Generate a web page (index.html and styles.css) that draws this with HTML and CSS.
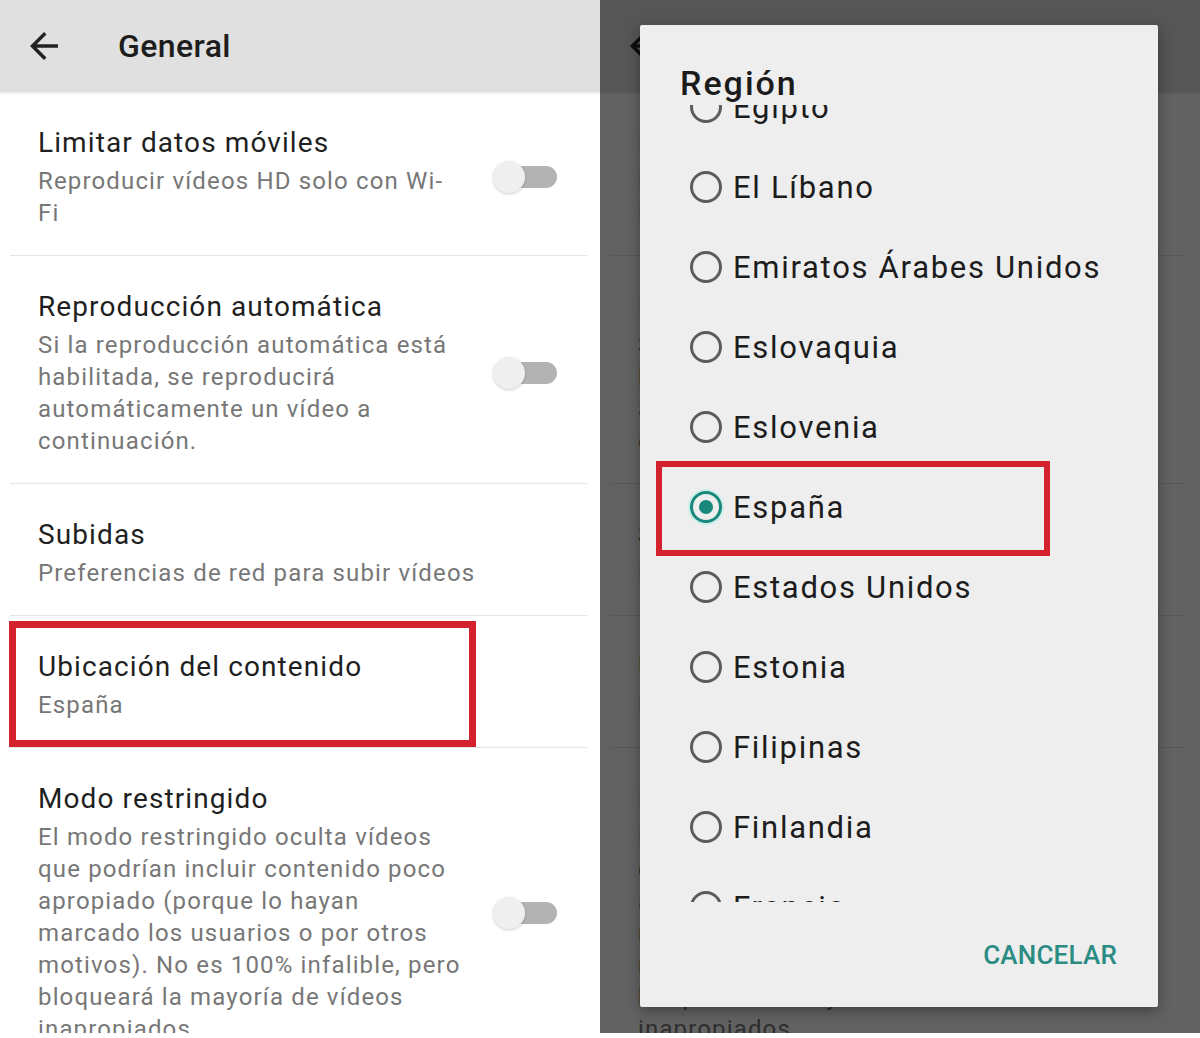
FILE: index.html
```html
<!DOCTYPE html>
<html lang="es">
<head>
<meta charset="utf-8">
<title>General - Región</title>
<link rel="stylesheet" href="styles.css">
</head>
<body>
<div class="page">
  <section class="screen">
    <header class="appbar">
      <svg class="back" viewBox="0 0 24 24" width="42" height="42"><path d="M20 11H7.83l5.59-5.59L12 4l-8 8 8 8 1.41-1.41L7.83 13H20v-2z" fill="#222"/></svg>
      <h1 class="appbar-title">General</h1>
    </header>
    <ul class="settings">
      <li class="item">
        <div class="text"><div class="title">Limitar datos móviles</div><div class="sub">Reproducir vídeos HD solo con Wi-Fi</div></div>
        <span class="switch"><span class="thumb"></span></span>
      </li>
      <li class="item">
        <div class="text"><div class="title">Reproducción automática</div><div class="sub">Si la reproducción automática está habilitada, se reproducirá automáticamente un vídeo a continuación.</div></div>
        <span class="switch"><span class="thumb"></span></span>
      </li>
      <li class="item">
        <div class="text"><div class="title">Subidas</div><div class="sub">Preferencias de red para subir vídeos</div></div>
      </li>
      <li class="item">
        <div class="text"><div class="title">Ubicación del contenido</div><div class="sub">España</div></div>
        <span class="mark mark-left"></span>
      </li>
      <li class="item">
        <div class="text"><div class="title">Modo restringido</div><div class="sub">El modo restringido oculta vídeos que podrían incluir contenido poco apropiado (porque lo hayan marcado los usuarios o por otros motivos). No es 100% infalible, pero bloqueará la mayoría de vídeos inapropiados.</div></div>
        <span class="switch"><span class="thumb"></span></span>
      </li>
    </ul>
  </section>

  <section class="screen">
    <header class="appbar">
      <svg class="back" viewBox="0 0 24 24" width="42" height="42"><path d="M20 11H7.83l5.59-5.59L12 4l-8 8 8 8 1.41-1.41L7.83 13H20v-2z" fill="#222"/></svg>
      <h1 class="appbar-title">General</h1>
    </header>
    <ul class="settings">
      <li class="item">
        <div class="text"><div class="title">Limitar datos móviles</div><div class="sub">Reproducir vídeos HD solo con Wi-Fi</div></div>
        <span class="switch"><span class="thumb"></span></span>
      </li>
      <li class="item">
        <div class="text"><div class="title">Reproducción automática</div><div class="sub">Si la reproducción automática está habilitada, se reproducirá automáticamente un vídeo a continuación.</div></div>
        <span class="switch"><span class="thumb"></span></span>
      </li>
      <li class="item">
        <div class="text"><div class="title">Subidas</div><div class="sub">Preferencias de red para subir vídeos</div></div>
      </li>
      <li class="item">
        <div class="text"><div class="title">Ubicación del contenido</div><div class="sub">España</div></div>
      </li>
      <li class="item">
        <div class="text"><div class="title">Modo restringido</div><div class="sub">El modo restringido oculta vídeos que podrían incluir contenido poco apropiado (porque lo hayan marcado los usuarios o por otros motivos). No es 100% infalible, pero bloqueará la mayoría de vídeos inapropiados.</div></div>
        <span class="switch"><span class="thumb"></span></span>
      </li>
    </ul>
    <div class="scrim"></div>
    <div class="dialog">
      <h2 class="dialog-title">Región</h2>
      <div class="options">
        <ul class="option-list">
          <li class="option"><span class="radio"></span><span class="label">Egipto</span></li>
          <li class="option"><span class="radio"></span><span class="label">El Líbano</span></li>
          <li class="option"><span class="radio"></span><span class="label">Emiratos Árabes Unidos</span></li>
          <li class="option"><span class="radio"></span><span class="label">Eslovaquia</span></li>
          <li class="option"><span class="radio"></span><span class="label">Eslovenia</span></li>
          <li class="option selected"><span class="radio"></span><span class="label">España</span><span class="mark mark-right"></span></li>
          <li class="option"><span class="radio"></span><span class="label">Estados Unidos</span></li>
          <li class="option"><span class="radio"></span><span class="label">Estonia</span></li>
          <li class="option"><span class="radio"></span><span class="label">Filipinas</span></li>
          <li class="option"><span class="radio"></span><span class="label">Finlandia</span></li>
          <li class="option"><span class="radio"></span><span class="label">Francia</span></li>
        </ul>
      </div>
      <div class="actions"><span class="btn">CANCELAR</span></div>
    </div>
  </section>
</div>
</body>
</html>
```

FILE: styles.css
```css
* { box-sizing: border-box; }
html, body { margin: 0; padding: 0; background: #fff; }
body { font-family: Roboto, "Noto Sans", "Liberation Sans", sans-serif; color: #212121; }

.page { display: flex; width: 1200px; height: 1038px; }

.screen {
  position: relative;
  width: 600px;
  height: 1033px;
  overflow: hidden;
  background: #fff;
}

.appbar {
  height: 92px;
  background: #e0e0e0;
  display: flex;
  align-items: center;
  box-shadow: 0 1px 3px rgba(0,0,0,0.12);
  position: relative;
  z-index: 1;
}
.back { margin-left: 23px; flex: none; }
.appbar-title {
  margin: 0 0 0 53px;
  font-size: 32px;
  font-weight: 500;
  letter-spacing: 0.4px;
  color: #1d1d1d;
}

.settings { list-style: none; margin: 0 13px 0 10px; padding: 0; }
.item {
  position: relative;
  display: flex;
  align-items: center;
  padding: 33px 30px 26px 28px;
  border-bottom: 1px solid #e6e6e6;
}
.text { flex: 1; min-width: 0; }
.title { font-size: 28px; line-height: 36px; letter-spacing: 1.1px; color: #1f1f1f; }
.sub { margin-top: 4px; font-size: 24px; line-height: 32px; letter-spacing: 1.15px; color: #777; }

.switch {
  position: relative;
  margin-left: 32px;
  width: 64px;
  height: 32px;
  flex: none;
}
.switch::before {
  content: "";
  position: absolute;
  left: 8px; top: 5px;
  width: 56px; height: 22px;
  border-radius: 11px;
  background: #b3b3b3;
}
.thumb {
  position: absolute;
  left: 0; top: 0;
  width: 32px; height: 32px;
  border-radius: 50%;
  background: #efefef;
  box-shadow: 0 1px 3px rgba(0,0,0,0.2);
}

.mark { position: absolute; border: 7px solid #d3222d; }
.mark-left { left: -1px; top: 5px; width: 467px; height: 126px; }

.scrim { position: absolute; inset: 0; background: rgba(0,0,0,0.615); z-index: 2; }

.dialog {
  position: absolute;
  z-index: 3;
  left: 40px; top: 25px;
  width: 518px; height: 982px;
  background: #eeeeee;
  border-radius: 2px;
  box-shadow: 0 4px 14px rgba(0,0,0,0.35);
  display: flex;
  flex-direction: column;
}
.dialog-title {
  position: relative;
  z-index: 1;
  height: 80px;
  margin: 0;
  padding: 38px 0 0 40px;
  font-size: 34px;
  line-height: 40px;
  font-weight: 500;
  letter-spacing: 2px;
  color: #1b1b1b;
}
.options { height: 797px; overflow: hidden; }
.option-list { list-style: none; margin: -38px 0 0; padding: 0; }
.option {
  position: relative;
  height: 80px;
  display: flex;
  align-items: center;
  padding-left: 50px;
}
.radio {
  width: 32px; height: 32px;
  border-radius: 50%;
  border: 3px solid #5c5c5c;
  flex: none;
  position: relative;
}
.selected .radio {
  border-color: #17887b;
  box-shadow: 0 0 0 2px #c9efe9;
}
.selected .radio::after {
  content: "";
  position: absolute;
  left: 6px; top: 6px;
  width: 14px; height: 14px;
  border-radius: 50%;
  background: #17887b;
}
.label { margin-left: 11px; font-size: 31px; letter-spacing: 1.7px; color: #1c1c1c; }
.mark-right { left: 16px; top: -6px; width: 394px; height: 95px; border-width: 6px; }

.actions {
  height: 105px;
  display: flex;
  align-items: center;
  justify-content: flex-end;
  padding-right: 41px;
}
.btn { font-size: 26px; font-weight: 500; letter-spacing: 0.2px; color: #2a8c83; }
```
